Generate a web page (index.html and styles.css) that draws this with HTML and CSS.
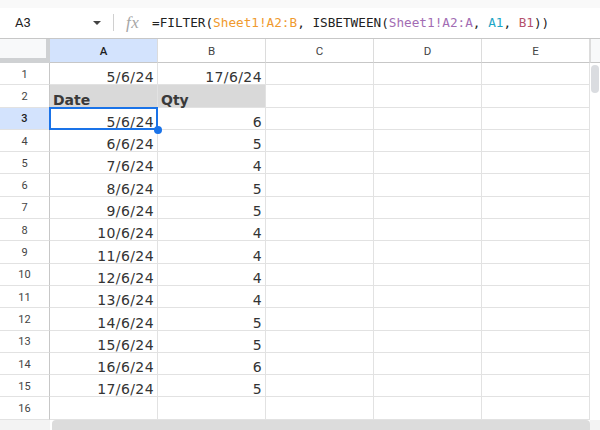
FILE: index.html
```html
<!DOCTYPE html>
<html>
<head>
<meta charset="utf-8">
<link rel="stylesheet" href="styles.css">
</head>
<body>
<div class="app">
  <div class="topstrip"></div>
  <div class="fbar">
    <div class="namebox">
      <span class="ref">A3</span>
      <svg class="caret" width="8" height="4" viewBox="0 0 8 4"><path d="M0 0 L8 0 L4 4 Z" fill="#444"/></svg>
    </div>
    <div class="vsep"></div>
    <span class="fx">fx</span>
    <div class="formula">=FILTER(<span class="r1">Sheet1!A2:B</span>, ISBETWEEN(<span class="r2">Sheet1!A2:A</span>, <span class="r3">A1</span>, <span class="r4">B1</span>))</div>
  </div>
  <div class="main">
    <div class="sheet">
      <div class="corner"></div>
      <div class="ch ch-sel">A</div><div class="ch">B</div><div class="ch">C</div><div class="ch">D</div><div class="ch">E</div>

      <div class="rh">1</div><div class="c">5/6/24</div><div class="c">17/6/24</div><div class="c"></div><div class="c"></div><div class="c"></div>
      <div class="rh">2</div><div class="c hd">Date</div><div class="c hd">Qty</div><div class="c"></div><div class="c"></div><div class="c"></div>
      <div class="rh rh-sel">3</div><div class="c sel">5/6/24</div><div class="c">6</div><div class="c"></div><div class="c"></div><div class="c"></div>
      <div class="rh">4</div><div class="c">6/6/24</div><div class="c">5</div><div class="c"></div><div class="c"></div><div class="c"></div>
      <div class="rh">5</div><div class="c">7/6/24</div><div class="c">4</div><div class="c"></div><div class="c"></div><div class="c"></div>
      <div class="rh">6</div><div class="c">8/6/24</div><div class="c">5</div><div class="c"></div><div class="c"></div><div class="c"></div>
      <div class="rh">7</div><div class="c">9/6/24</div><div class="c">5</div><div class="c"></div><div class="c"></div><div class="c"></div>
      <div class="rh">8</div><div class="c">10/6/24</div><div class="c">4</div><div class="c"></div><div class="c"></div><div class="c"></div>
      <div class="rh">9</div><div class="c">11/6/24</div><div class="c">4</div><div class="c"></div><div class="c"></div><div class="c"></div>
      <div class="rh">10</div><div class="c">12/6/24</div><div class="c">4</div><div class="c"></div><div class="c"></div><div class="c"></div>
      <div class="rh">11</div><div class="c">13/6/24</div><div class="c">4</div><div class="c"></div><div class="c"></div><div class="c"></div>
      <div class="rh">12</div><div class="c">14/6/24</div><div class="c">5</div><div class="c"></div><div class="c"></div><div class="c"></div>
      <div class="rh">13</div><div class="c">15/6/24</div><div class="c">5</div><div class="c"></div><div class="c"></div><div class="c"></div>
      <div class="rh">14</div><div class="c">16/6/24</div><div class="c">6</div><div class="c"></div><div class="c"></div><div class="c"></div>
      <div class="rh">15</div><div class="c">17/6/24</div><div class="c">5</div><div class="c"></div><div class="c"></div><div class="c"></div>
      <div class="rh">16</div><div class="c"></div><div class="c"></div><div class="c"></div><div class="c"></div><div class="c"></div>
    </div>
    <div class="vscroll">
      <div class="vhead"></div>
      <div class="vtrack"><div class="vthumb"></div></div>
    </div>
  </div>
  <div class="hscroll">
    <div class="hleft"></div>
    <div class="hthumb"></div>
    <div class="hright"></div>
  </div>
</div>
</body>
</html>
```

FILE: styles.css
```css
* { box-sizing: border-box; }
html, body { margin: 0; padding: 0; background: #fff; }
.app {
  width: 600px;
  height: 430px;
  overflow: hidden;
  display: flex;
  flex-direction: column;
  font-family: Roboto, "Liberation Sans", sans-serif;
}
.topstrip { height: 8px; background: #f9f9f9; flex: none; }
.fbar {
  height: 31px;
  flex: none;
  display: flex;
  align-items: center;
  border-bottom: 1px solid #c7c7c7;
  background: #fff;
  padding-bottom: 1px;
}
.namebox {
  width: 113px;
  display: flex;
  align-items: center;
  padding-left: 15px;
}
.ref { font-size: 13px; color: #222; width: 78px; }
.caret { display: block; margin-top: 1px; }
.vsep { width: 1px; height: 17px; background: #d0d0d0; }
.fx {
  font-family: "Liberation Serif", serif;
  font-style: italic;
  font-size: 17px;
  color: #a6a6a6;
  margin-left: 12px;
  width: 26px;
  letter-spacing: 0.5px;
}
.formula {
  font-family: "DejaVu Sans Mono", monospace;
  font-size: 12.7px;
  color: #222;
  white-space: nowrap;
}
.r1 { color: #f09a2e; }
.r2 { color: #a26cb3; }
.r3 { color: #1ca6c6; }
.r4 { color: #b4506d; }

.main { display: flex; flex: none; height: 381px; }
.sheet {
  width: 590px;
  display: grid;
  grid-template-columns: 50px repeat(5, 108px);
  grid-template-rows: 24px repeat(16, 22.3px);
}
.corner {
  background: #f8f9fa;
  border-right: 4px solid #cfd1d3;
  border-bottom: 5px solid #cfd1d3;
}
.ch {
  display: flex;
  align-items: center;
  justify-content: center;
  font-size: 11.5px;
  color: #444;
  border-right: 1px solid #dcdcdc;
  border-bottom: 1px solid #c7c7c7;
  background: #fff;
}
.ch-sel { background: #d3e3fd; color: #1f1f1f; font-weight: 500; }
.rh {
  display: flex;
  align-items: center;
  justify-content: center;
  font-size: 11px;
  color: #444;
  border-right: 1px solid #c7c7c7;
  border-bottom: 1px solid #e2e2e2;
  background: #fff;
  padding-top: 1px;
}
.rh-sel { background: #d3e3fd; color: #1f1f1f; font-weight: 500; }
.c {
  display: flex;
  align-items: flex-end;
  justify-content: flex-end;
  padding: 0 3px 0 3px;
  font-family: "DejaVu Sans", Verdana, sans-serif;
  font-size: 14px;
  line-height: 14px;
  letter-spacing: 0.4px;
  color: #333;
  border-right: 1px solid #e2e2e2;
  border-bottom: 1px solid #e2e2e2;
  white-space: nowrap;
}
.hd {
  background: #d9d9d9;
  font-weight: bold;
  justify-content: flex-start;
  letter-spacing: 0;
  color: #3a3a3a;
}
.sel { position: relative; z-index: 2; }
.sel::after {
  content: "";
  position: absolute;
  top: -1px; left: -1px; right: -1px; bottom: -1px;
  border: 2px solid #1a73e8;
}
.sel::before {
  content: "";
  position: absolute;
  right: -5px;
  bottom: -5px;
  width: 8px;
  height: 8px;
  border-radius: 50%;
  background: #1a73e8;
  z-index: 3;
}

.vscroll { width: 10px; display: flex; flex-direction: column; }
.vhead { height: 24px; background: #f8f9fa; border-left: 1px solid #dcdcdc; border-bottom: 1px solid #c7c7c7; }
.vtrack { flex: 1; padding: 2px 1px 0 1px; background: #fff; }
.vthumb { height: 28px; background: #dadce0; border-radius: 5px; }

.hscroll { height: 10px; display: flex; flex: none; }
.hleft { width: 50px; background: #f3f3f3; }
.hthumb { width: 538px; margin-left: 2px; background: #dcdcdc; border-radius: 4px 4px 0 0; }
.hright { flex: 1; background: #f3f3f3; }
```
